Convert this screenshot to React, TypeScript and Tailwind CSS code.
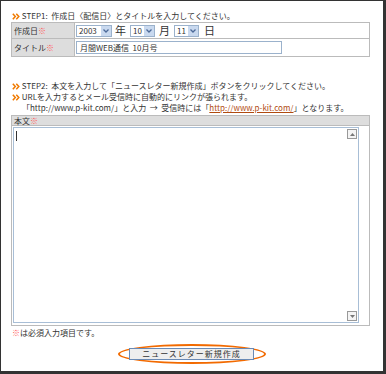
const font = { fontFamily: '"Noto Sans CJK JP", "Liberation Sans", sans-serif' };

export default function App() {
  return (
    <div className="w-[386px] h-[374px] bg-[#333] pt-px pl-px pr-[3px] pb-[3px]" style={font}>
      <div className="h-full bg-white pl-[10px] pt-[9px] text-[8px] leading-[11px] text-[#333]">
        <p className="pl-px">
          <Mark /> STEP1:&nbsp;&nbsp;作成日〈配信日〉とタイトルを入力してください。
        </p>
        <div className="mt-px w-[359px] border border-[#bbb]">
          <div className="flex h-[16px] border-b border-[#bbb]">
            <div className="w-[63px] bg-[#ddd] border-r border-[#bbb] pl-[2px] flex items-center">
              作成日<span className="text-[#f55]">※</span>
            </div>
            <div className="flex items-center pl-px">
              <Sel v="2003" w="w-[36px]" />
              <span className="text-[11px] w-[18px] pl-[3px]">年</span>
              <Sel v="10" w="w-[25px]" />
              <span className="text-[11px] w-[19px] pl-[4px]">月</span>
              <Sel v="11" w="w-[25px]" />
              <span className="text-[11px] pl-[5px]">日</span>
            </div>
          </div>
          <div className="flex h-[17px]">
            <div className="w-[63px] bg-[#ddd] border-r border-[#bbb] pl-[2px] flex items-center">
              タイトル<span className="text-[#f55]">※</span>
            </div>
            <div className="flex items-center pl-px">
              <div className="w-[206px] h-[13px] border border-[#9bb2cc] pl-[3px] flex items-center">
                月間WEB通信&nbsp;&nbsp;10月号
              </div>
            </div>
          </div>
        </div>

        <div className="mt-[23px] pl-px">
          <p>
            <Mark /> STEP2:&nbsp;&nbsp;本文を入力して「ニュースレター新規作成」ボタンをクリックしてください。
          </p>
          <p>
            <Mark /> URLを入力するとメール受信時に自動的にリンクが張られます。
          </p>
          <p className="pl-[10px]">
            「http://www.p-kit.com/」と入力&nbsp;&nbsp;→&nbsp;&nbsp;受信時には「
            <span className="text-[#b04a10] underline">http://www.p-kit.com/</span>」となります。
          </p>
        </div>

        <div className="mt-[2px] w-[359px] border border-[#bbb]">
          <div className="h-[10px] bg-[#ddd] border-b border-[#bbb] pl-[2px] flex items-center">
            本文<span className="text-[#f55]">※</span>
          </div>
          <div className="pl-px pt-px pb-[2px]">
            <div className="w-[346px] h-[196px] border border-[#a8bed6] flex">
              <div className="flex-1 pl-[2px] pt-[3px]">
                <div className="w-px h-[10px] bg-[#333]" />
              </div>
              <div className="w-[11px] flex flex-col justify-between py-px">
                <Arrow up />
                <Arrow />
              </div>
            </div>
          </div>
        </div>

        <p className="mt-px pl-px">
          <span className="text-[#f55]">※</span>は必須入力項目です。
        </p>

        <div className="flex justify-center mt-[6px] pr-[10px]">
          <div className="rounded-[50%] border-[2.5px] border-[#f26a00] pl-[9px] pr-[10px] py-[2px]">
            <button className="w-[125px] h-[12px] bg-[#eee] border border-[#6a8ab5] text-[8px] leading-[8px] text-[#333] tracking-[1px] flex items-center justify-center">
              ニュースレター新規作成
            </button>
          </div>
        </div>
      </div>
    </div>
  );
}

function Mark() {
  return (
    <svg width="8" height="7" viewBox="0 0 8 7" className="inline-block align-[-0.5px]">
      <path d="M0.8 0.8 L3.3 3.5 L0.8 6.2 M4.3 0.8 L6.8 3.5 L4.3 6.2" stroke="#f07a00" strokeWidth="1.5" fill="none" />
    </svg>
  );
}

function Sel({ v, w }: { v: string; w: string }) {
  return (
    <div className={`${w} h-[12px] border border-[#9bb2cc] flex items-center justify-between pl-[2px]`}>
      <span className="text-[8px]">{v}</span>
      <span className="w-[10px] h-full bg-[#c9d9ef] flex items-center justify-center">
        <svg width="6" height="4" viewBox="0 0 6 4">
          <path d="M0.5 0.5 L3 3 L5.5 0.5" stroke="#4d6a99" strokeWidth="1.3" fill="none" />
        </svg>
      </span>
    </div>
  );
}

function Arrow({ up }: { up?: boolean }) {
  return (
    <div className="w-[10px] h-[10px] border border-[#999] bg-[#f4f4f4] flex items-center justify-center">
      <svg width="5" height="3" viewBox="0 0 5 3">
        <path d={up ? "M0 3 L2.5 0 L5 3 Z" : "M0 0 L2.5 3 L5 0 Z"} fill="#777" />
      </svg>
    </div>
  );
}
